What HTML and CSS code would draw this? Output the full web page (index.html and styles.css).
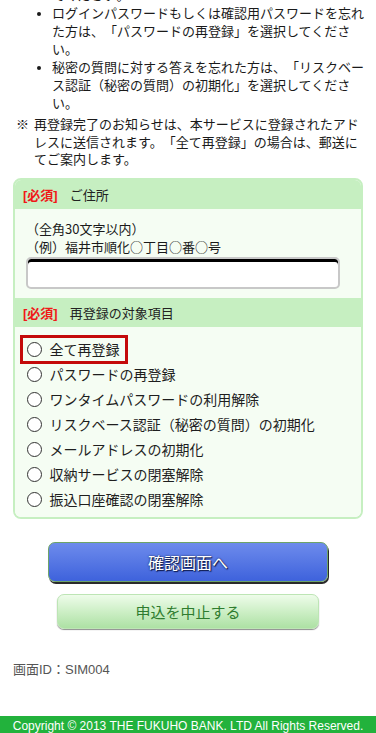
FILE: index.html
```html
<!DOCTYPE html>
<html lang="ja">
<head>
<meta charset="utf-8">
<meta name="viewport" content="width=device-width, initial-scale=1">
<title>再登録</title>
<link rel="stylesheet" href="styles.css">
</head>
<body>
<main class="page">
  <ul class="guide">
    <li>ログインＩＤを忘れた方は、「全て再登録」を選択し<br>てください。</li>
    <li>ログインパスワードもしくは確認用パスワードを忘れた方は、「パスワードの再登録」を選択してください。</li>
    <li>秘密の質問に対する答えを忘れた方は、「リスクベース認証（秘密の質問）の初期化」を選択してください。</li>
  </ul>

  <p class="note"><span class="note-mark">※</span><span class="note-text">再登録完了のお知らせは、本サービスに登録されたアドレスに送信されます。「全て再登録」の場合は、郵送にてご案内します。</span></p>

  <section class="form-box">
    <div class="sec-head"><span class="req">[必須]</span><span>ご住所</span></div>
    <div class="sec-body addr-body">
      <p class="hint">（全角30文字以内）<br>（例）福井市順化○丁目○番○号</p>
      <input class="text-input" type="text" aria-label="ご住所">
    </div>

    <div class="sec-head"><span class="req">[必須]</span><span>再登録の対象項目</span></div>
    <div class="sec-body radio-body">
      <label class="radio-row selected"><span class="radio"></span><span>全て再登録</span></label>
      <label class="radio-row"><span class="radio"></span><span>パスワードの再登録</span></label>
      <label class="radio-row"><span class="radio"></span><span>ワンタイムパスワードの利用解除</span></label>
      <label class="radio-row"><span class="radio"></span><span>リスクベース認証（秘密の質問）の初期化</span></label>
      <label class="radio-row"><span class="radio"></span><span>メールアドレスの初期化</span></label>
      <label class="radio-row"><span class="radio"></span><span>収納サービスの閉塞解除</span></label>
      <label class="radio-row"><span class="radio"></span><span>振込口座確認の閉塞解除</span></label>
    </div>
  </section>

  <div class="actions">
    <button class="btn btn-primary" type="button">確認画面へ</button>
    <button class="btn btn-cancel" type="button">申込を中止する</button>
  </div>

  <p class="screen-id">画面ID：SIM004</p>
</main>
<footer class="footer">Copyright © 2013 THE FUKUHO BANK. LTD All Rights Reserved.</footer>
</body>
</html>
```

FILE: styles.css
```css
html, body {
  margin: 0;
  padding: 0;
  background: #ffffff;
}

body {
  font-family: "Liberation Sans", "Noto Sans CJK JP", sans-serif;
  font-size: 13px;
  color: #1a1a1a;
  text-spacing-trim: space-all;
}

.page {
  padding: 0 13px;
}

.guide {
  margin: -31px -5px 0 0;
  padding: 0 0 0 39px;
  line-height: 18px;
  list-style: disc;
}

.note {
  display: flex;
  margin: 3px 0 0 3px;
  line-height: 17.5px;
}

.note-mark {
  flex: 0 0 18px;
}

.note-text {
  flex: 1 1 auto;
}

.form-box {
  margin-top: 9px;
  border: 2px solid #c6efc1;
  border-radius: 8px;
  overflow: hidden;
}

.sec-head {
  display: flex;
  align-items: center;
  height: 29px;
  padding: 0 8px;
  background: #c6efc1;
  color: #222;
}

.req {
  color: #f01818;
  font-weight: bold;
  margin-right: 12px;
}

.sec-body {
  background: #f5fdf3;
}

.addr-body {
  padding: 11px 11px 9px;
}

.hint {
  margin: 0;
  line-height: 18.5px;
  font-family: "Noto Sans CJK JP", "Liberation Sans", sans-serif;
}

.text-input {
  display: block;
  box-sizing: border-box;
  width: 314px;
  height: 32px;
  margin: 0;
  padding: 0 6px;
  border: 2px solid #c8c8c8;
  border-radius: 5px;
  background: #ffffff;
  box-shadow: inset 0 3px 0 #000000;
  font-size: 14px;
}

.radio-body {
  display: flex;
  flex-direction: column;
  align-items: flex-start;
  padding: 10px 11px 5px 11.5px;
  font-size: 14px;
  color: #1e1e1e;
}

.radio-row {
  display: flex;
  align-items: center;
  gap: 8px;
  height: 25px;
}

.radio {
  box-sizing: border-box;
  width: 15px;
  height: 15px;
  border: 1.5px solid #333333;
  border-radius: 50%;
  background: #ffffff;
}

.radio-row.selected {
  margin-left: -5px;
  padding: 0 6.5px 0 5px;
  outline: 3px solid #c40a0a;
  outline-offset: -1.5px;
}

.actions {
  display: flex;
  flex-direction: column;
  align-items: center;
  margin-top: 23px;
}

.btn {
  display: block;
  box-sizing: border-box;
  font-family: "Liberation Sans", "Noto Sans CJK JP", sans-serif;
  cursor: pointer;
}

.btn-primary {
  width: 280px;
  height: 40px;
  border: 1px solid #6ea468;
  border-radius: 7px;
  background: linear-gradient(#6d8bec 0%, #5677e4 50%, #3e62dc 100%);
  box-shadow: 1px 2px 0 #2a2a2a;
  color: #ffffff;
  font-size: 16px;
  text-shadow: 0 0 2px #0e1a4a, 1px 1px 1px #0e1a4a;
}

.btn-cancel {
  width: 262px;
  height: 35px;
  margin-top: 12px;
  border: 1px solid #bde5b5;
  border-radius: 7px;
  background: linear-gradient(#eefcea 0%, #cdefc6 50%, #ade1a4 100%);
  box-shadow: 0 1px 1px #8c8c8c;
  color: #2f7c2f;
  font-size: 15px;
}

.screen-id {
  margin: 32px 0 0;
  line-height: 18px;
  color: #555555;
}

.footer {
  margin-top: 37px;
  height: 20px;
  line-height: 20px;
  background: #22b23c;
  color: #ffffff;
  font-size: 12px;
  text-align: center;
  white-space: nowrap;
}
```
